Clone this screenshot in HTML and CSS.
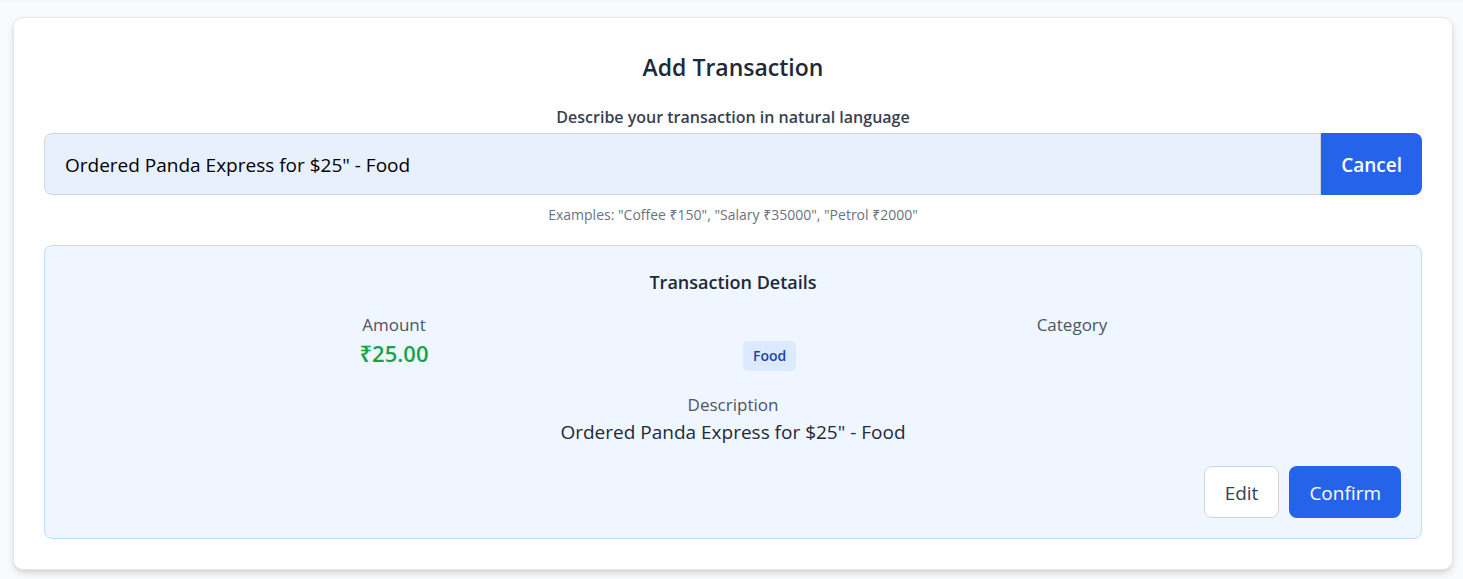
FILE: index.html
```html
<!DOCTYPE html>
<html lang="en">
<head>
<meta charset="utf-8">
<meta name="viewport" content="width=device-width, initial-scale=1">
<title>Add Transaction</title>
<link rel="stylesheet" href="styles.css">
</head>
<body>
<main class="page">
  <section class="card">
    <h2 class="card-title">Add Transaction</h2>
    <form class="entry">
      <label class="entry-label" for="transaction">Describe your transaction in natural language</label>
      <div class="entry-row">
        <input class="entry-input" id="transaction" type="text" value="Ordered Panda Express for $25&quot; - Food">
        <button class="entry-button" type="button">Cancel</button>
      </div>
      <p class="entry-hint">Examples: "Coffee ₹150", "Salary ₹35000", "Petrol ₹2000"</p>
    </form>
    <section class="details">
      <h3 class="details-title">Transaction Details</h3>
      <div class="details-grid">
        <div class="field">
          <p class="field-label">Amount</p>
          <p class="amount">₹25.00</p>
        </div>
        <div class="field">
          <p class="field-label">Category</p>
          <span class="badge">Food</span>
        </div>
      </div>
      <div class="field">
        <p class="field-label">Description</p>
        <p class="description">Ordered Panda Express for $25" - Food</p>
      </div>
      <div class="actions">
        <button class="button button-plain" type="button">Edit</button>
        <button class="button button-primary" type="button">Confirm</button>
      </div>
    </section>
  </section>
</main>
</body>
</html>
```

FILE: styles.css
```css
* {
  box-sizing: border-box;
}

body,
h2,
h3,
p {
  margin: 0;
}

body {
  background: #f9fafb;
  font-family: "Open Sans", "Noto Sans", sans-serif;
  color: #1f2937;
}

button,
input {
  font: inherit;
}

.page {
  padding: 17px 10px 8px 13px;
  background: linear-gradient(#f6f7f8, #f9fafb 4px);
}

.card {
  padding: 30px;
  background: #fff;
  border: 1px solid #e5e7eb;
  border-radius: 10px;
  box-shadow: 0 4px 8px -1px rgba(0, 0, 0, 0.12), 0 2px 5px -2px rgba(0, 0, 0, 0.12);
}

.card-title {
  margin-bottom: 20px;
  font-size: 23px;
  font-weight: 600;
  line-height: 38px;
  text-align: center;
}

.entry {
  margin-bottom: 20px;
}

.entry-label {
  display: block;
  margin-bottom: 5px;
  font-size: 16px;
  font-weight: 600;
  line-height: 22px;
  text-align: center;
  color: #374151;
}

.entry-row {
  display: flex;
}

.entry-input {
  flex: 1;
  min-width: 0;
  height: 62px;
  padding: 2px 20px 0;
  font-size: 19px;
  color: #000;
  background: #e8f0fe;
  border: 1px solid #d1d5db;
  border-radius: 8px 0 0 8px;
}

.entry-button {
  padding: 2px 20px 0;
  font-size: 19px;
  font-weight: 600;
  color: #fff;
  background: #2563eb;
  border: 0;
  border-radius: 0 8px 8px 0;
}

.entry-hint {
  margin-top: 10px;
  font-size: 14px;
  line-height: 20px;
  text-align: center;
  color: #6b7280;
}

.details {
  padding: 20px;
  background: #eff6ff;
  border: 1px solid #bfdbfe;
  border-radius: 8px;
}

.details-title {
  margin-bottom: 14px;
  font-size: 18px;
  font-weight: 600;
  line-height: 32px;
  text-align: center;
}

.details-grid {
  display: grid;
  grid-template-columns: 1fr 1fr;
  gap: 20px;
  margin-bottom: 21px;
}

.field-label {
  font-size: 17px;
  line-height: 25px;
  text-align: center;
  color: #4b5563;
}

.amount {
  font-size: 22px;
  font-weight: 600;
  line-height: 32px;
  text-align: center;
  color: #16a34a;
}

.badge {
  display: block;
  width: fit-content;
  margin-top: 4px;
  padding: 5px 10px;
  font-size: 14px;
  font-weight: 600;
  line-height: 20px;
  color: #1e40af;
  background: #dbeafe;
  border-radius: 5px;
}

.description {
  font-size: 19px;
  line-height: 30px;
  text-align: center;
}

.actions {
  display: flex;
  justify-content: flex-end;
  gap: 10px;
  margin-top: 19px;
}

.button {
  height: 52px;
  padding: 2px 20px 0;
  font-size: 19px;
  border-radius: 8px;
}

.button-plain {
  color: #374151;
  background: #fff;
  border: 1px solid #d1d5db;
}

.button-primary {
  color: #fff;
  background: #2563eb;
  border: 0;
}
```
